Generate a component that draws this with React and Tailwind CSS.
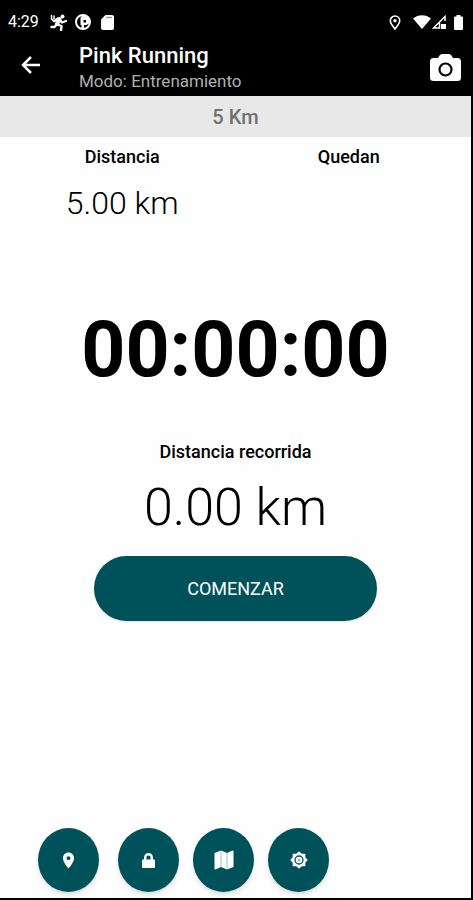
// Training screen: status bar, app bar, run stats, timer and quick actions.

import { MdPlace } from 'react-icons/md';

// ─────────────────────────────────────────────────────────────────────────────
// Icons
// ─────────────────────────────────────────────────────────────────────────────
function RunnerIcon() {
  return (
    <svg viewBox="0 0 17 17" className="size-[17px]" fill="none" stroke="currentColor" strokeLinecap="round" strokeLinejoin="round">
      <circle cx="12.5" cy="2.5" r="2" fill="currentColor" stroke="none" />
      <path d="M9.500 5 7 10" strokeWidth="4" />
      <path d="M8 4.500 4.500 7M10 6l2 2.500 4-1.500M7.500 10.500l4 1.500-.5 4M6.500 10.500l-2 2.500H1.500" strokeWidth="2.400" />
      <path d="M1.500 1.500v3.500L4 7.500M4 2v3" strokeWidth="1.500" />
    </svg>
  );
}

function BadgeIcon() {
  return (
    <svg viewBox="0 0 16 16" className="size-4">
      <circle cx="8" cy="8" r="7" fill="none" stroke="currentColor" strokeWidth="2" />
      <path fill="currentColor" fillRule="evenodd" d="M5.500 3.500 8 1h3l4 4-.5 4-3 2H9v4H6.500v-4h-1zM8.500 6v2.500h2.500V6z" />
    </svg>
  );
}

function SdCardIcon() {
  return (
    <svg viewBox="0 0 13 15" className="h-[15px] w-[13px]" fill="currentColor">
      <path d="M4.500 0H11a2 2 0 0 1 2 2v11a2 2 0 0 1-2 2H2a2 2 0 0 1-2-2V4.500z" />
      <path d="M5 2.500h6" stroke="#999" strokeWidth="1.500" />
    </svg>
  );
}

function PinOutlineIcon() {
  return (
    <svg viewBox="0 0 12 15" className="h-[15px] w-3">
      <path d="M6 1a4.700 4.700 0 0 0-4.700 4.700C1.300 8.500 4 11 6 14c2-3 4.700-5.500 4.700-8.300A4.700 4.700 0 0 0 6 1z" fill="none" stroke="currentColor" strokeWidth="1.600" />
      <circle cx="6" cy="5.800" r="1.700" fill="currentColor" />
    </svg>
  );
}

function WifiIcon() {
  return (
    <svg viewBox="0 0 18 14" className="h-3.5 w-[18px]" fill="currentColor">
      <path d="M0 3.500C5-1 13-1 18 3.500L9 14z" />
    </svg>
  );
}

function SignalIcon() {
  return (
    <svg viewBox="0 0 14 14" className="size-3.5">
      <path d="M13 6V1.500L1.500 13H7.500V8" fill="none" stroke="currentColor" strokeWidth="1.500" />
      <path d="M9 9h5v5H9z" fill="currentColor" />
    </svg>
  );
}

function BatteryIcon() {
  return (
    <svg viewBox="0 0 9 15" className="h-[15px] w-[9px]" fill="currentColor">
      <path d="M2.500 0h4v1.500H8a1 1 0 0 1 1 1V14a1 1 0 0 1-1 1H1a1 1 0 0 1-1-1V2.500a1 1 0 0 1 1-1h1.500z" />
    </svg>
  );
}

function BackIcon() {
  return (
    <svg viewBox="0 0 20 18" className="h-[18px] w-5" fill="none" stroke="currentColor" strokeWidth="2.500">
      <path d="M19 9H3M10 1 2 9l8 8" />
    </svg>
  );
}

function CameraIcon() {
  return (
    <svg viewBox="0 0 31 27" className="h-[27px] w-[31px]">
      <path fill="currentColor" d="M3.500 4H8l1.500-2.500Q10.500 0 12 0h7q1.500 0 2.500 1.500L23 4h4.500A3.500 3.500 0 0 1 31 7.500v16a3.500 3.500 0 0 1-3.500 3.500h-24A3.500 3.500 0 0 1 0 23.500v-16A3.500 3.500 0 0 1 3.500 4z" />
      <circle cx="15.500" cy="15.500" r="6" fill="none" stroke="#000" strokeWidth="2.200" />
    </svg>
  );
}

function LockIcon() {
  return (
    <svg viewBox="0 0 13 15" className="h-[15px] w-[13px]">
      <path d="M3.200 8V4.500a3.300 3.300 0 0 1 6.600 0V8" fill="none" stroke="currentColor" strokeWidth="2.400" />
      <rect y="6.500" width="13" height="8.500" rx="1" fill="currentColor" />
    </svg>
  );
}

function MapIcon() {
  return (
    <svg viewBox="0 0 20 20" className="size-5">
      <path fill="currentColor" d="M.5 3 7 .5l6 2.500 5.500-2.500 1 .5v16L13 19.500 7 17 1.500 19.500.5 19z" />
      <path d="M7 .5V17M13 3v16.500" stroke="#00525a" strokeOpacity=".3" strokeWidth="1.200" />
    </svg>
  );
}

function GearIcon() {
  return (
    <svg viewBox="0 0 18 18" className="size-[18px]">
      <path
        fill="currentColor"
        stroke="currentColor"
        strokeWidth="1.500"
        strokeLinejoin="round"
        d="M9 1.200 11.300 3.400H14.600V6.700L16.800 9 14.600 11.300V14.600H11.300L9 16.800 6.700 14.600H3.400V11.300L1.200 9 3.400 6.700V3.400H6.700z"
      />
      <circle cx="9" cy="9" r="4" fill="none" stroke="#00525a" strokeWidth="1.300" />
      <circle cx="9" cy="9" r="1.500" fill="#00525a" fillOpacity=".4" />
    </svg>
  );
}

const ACTIONS = [
  { id: 'location', label: 'Ubicación', icon: <MdPlace size={19} /> },
  { id: 'lock',     label: 'Bloquear',  icon: <LockIcon /> },
  { id: 'map',      label: 'Mapa',      icon: <MapIcon /> },
  { id: 'settings', label: 'Ajustes',   icon: <GearIcon /> },
];

function StatusBar() {
  return (
    <div className="flex h-11 items-center justify-between pr-2 pl-2">
      <div className="flex items-center">
        <span className="w-[42px] text-base">4:29</span>
        <div className="flex items-center gap-2">
          <RunnerIcon />
          <BadgeIcon />
          <span className="ml-0.5"><SdCardIcon /></span>
        </div>
      </div>
      <div className="flex items-center">
        <span className="mr-3"><PinOutlineIcon /></span>
        <WifiIcon />
        <span className="ml-px"><SignalIcon /></span>
        <span className="ml-2"><BatteryIcon /></span>
      </div>
    </div>
  );
}

// ─────────────────────────────────────────────────────────────────────────────
// Main component
// ─────────────────────────────────────────────────────────────────────────────
export default function App() {
  return (
    <div className="flex min-h-screen flex-col border-r-2 border-b-2 border-black bg-[#fefefe] font-['Roboto',sans-serif] text-black">
      <header className="bg-black text-white">
        <StatusBar />
        <div className="flex h-[52px] items-start pr-2.5 pl-[21px]">
          <button type="button" aria-label="Volver" className="mt-3">
            <BackIcon />
          </button>
          <div className="ml-[38px] flex-1">
            <h1 className="text-[22px] leading-6 font-medium">Pink Running</h1>
            <p className="text-[17px] leading-[26px] text-[#b0b0b0]">Modo: Entrenamiento</p>
          </div>
          <button type="button" aria-label="Cámara" className="mt-2.5">
            <CameraIcon />
          </button>
        </div>
      </header>

      <div className="h-[41px] bg-[#e8e8e8] text-center text-xl leading-[42px] font-medium text-[#707070]">5 Km</div>

      <main className="flex flex-1 flex-col">
        <section className="grid grid-cols-2 px-[9px] text-center">
          <div>
            <h2 className="mt-2 text-lg leading-6 font-medium">Distancia</h2>
            <p className="mt-3.5 text-[32px] leading-10 font-light">5.00 km</p>
          </div>
          <div>
            <h2 className="mt-2 text-lg leading-6 font-medium">Quedan</h2>
          </div>
        </section>

        <p className="mt-[79px] text-center text-[77px] leading-[96px] font-bold">00:00:00</p>

        <section className="mt-[42px] text-center">
          <h2 className="text-lg leading-6 font-medium">Distancia recorrida</h2>
          <p className="mt-3 text-[52px] leading-16 font-light">0.00 km</p>
        </section>

        <button
          type="button"
          className="mx-auto mt-4 h-[65px] w-3/5 rounded-full bg-[#00525a] text-lg text-white shadow-sm"
        >
          COMENZAR
        </button>

        <nav className="mt-auto mb-1.5 flex gap-3.5 pl-[38px]">
          {ACTIONS.map(({ id, label, icon }) => (
            <button
              key={id}
              type="button"
              aria-label={label}
              className="flex h-16 w-[61px] items-center justify-center rounded-[50%] bg-[#00525a] text-white shadow-md first:mr-[5px]"
            >
              {icon}
            </button>
          ))}
        </nav>
      </main>
    </div>
  );
}
